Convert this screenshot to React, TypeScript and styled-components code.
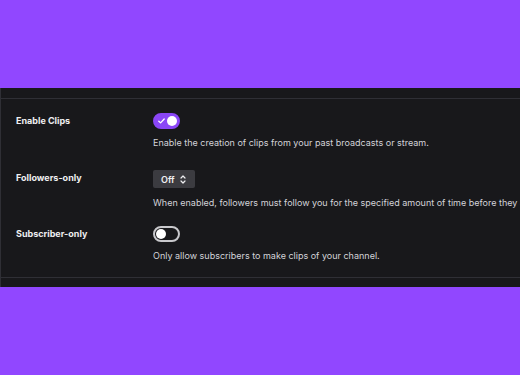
import React from "react";
import styled, { createGlobalStyle } from "styled-components";

const Global = createGlobalStyle`
  html, body { margin: 0; padding: 0; }
  body { background: #9147ff; font-family: Inter, "Noto Sans", sans-serif; }
`;

const Page = styled.div`
  width: 520px;
  height: 375px;
  background: #9147ff;
  padding-top: 88px;
  box-sizing: border-box;
  overflow: hidden;
`;

const Panel = styled.section`
  background: #18181b;
  border-left: 1px solid #2f2f35;
  width: 640px;
  padding: 10px 0 9px;
`;

const Body = styled.div`
  border-top: 1px solid #2f2f35;
  border-bottom: 1px solid #2f2f35;
  padding: 14px 0 15px;
  display: flex;
  flex-direction: column;
`;

const Row = styled.div<{ $after?: number }>`
  display: grid;
  grid-template-columns: 137px 1fr;
  padding-left: 15px;
  margin-bottom: ${(p) => p.$after ?? 0}px;
`;

const Label = styled.div`
  color: #efeff1;
  font-weight: 700;
  font-size: 9px;
  line-height: 14px;
  padding-top: 1px;
`;

const Control = styled.div<{ $gap: number }>`
  display: flex;
  flex-direction: column;
  align-items: flex-start;
  gap: ${(p) => p.$gap}px;
`;

const Desc = styled.div`
  color: #d3d3d9;
  font-size: 9px;
  line-height: 12px;
  white-space: nowrap;
`;

const Toggle = styled.div<{ $on: boolean }>`
  width: 27px;
  height: 16px;
  box-sizing: border-box;
  border-radius: 8px;
  border: 2px solid ${(p) => (p.$on ? "#8a46f6" : "#c8c8cc")};
  background: ${(p) => (p.$on ? "#8a46f6" : "transparent")};
  display: flex;
  align-items: center;
  justify-content: ${(p) => (p.$on ? "space-between" : "flex-start")};
  padding: 0 1px 0 ${(p) => (p.$on ? "3px" : "1px")};
`;

const Thumb = styled.div`
  width: 10px;
  height: 10px;
  border-radius: 50%;
  background: #ffffff;
`;

const Select = styled.div`
  height: 18px;
  width: 42px;
  box-sizing: border-box;
  background: #3b3b40;
  border-radius: 2px;
  display: flex;
  align-items: center;
  justify-content: space-between;
  padding: 0 9px 0 8px;
  color: #efeff1;
  font-size: 9px;
  font-weight: 600;
`;

const Check = () => (
  <svg width="7" height="6" viewBox="0 0 7 6">
    <path d="M0.8 3.2 L2.6 4.9 L6.2 1" fill="none" stroke="#fff" strokeWidth="1.3" strokeLinecap="round" strokeLinejoin="round" />
  </svg>
);

const Chevrons = () => (
  <svg width="6" height="9" viewBox="0 0 6 9">
    <path d="M1 3 L3 1 L5 3 M1 6 L3 8 L5 6" fill="none" stroke="#efeff1" strokeWidth="1.2" strokeLinecap="round" strokeLinejoin="round" />
  </svg>
);

export default function App() {
  return (
    <Page>
      <Global />
      <Panel>
        <Body>
          <Row $after={21}>
            <Label>Enable Clips</Label>
            <Control $gap={8}>
              <Toggle $on>
                <Check />
                <Thumb />
              </Toggle>
              <Desc>Enable the creation of clips from your past broadcasts or stream.</Desc>
            </Control>
          </Row>
          <Row $after={17}>
            <Label>Followers-only</Label>
            <Control $gap={9}>
              <Select>
                <span>Off</span>
                <Chevrons />
              </Select>
              <Desc>When enabled, followers must follow you for the specified amount of time before they are able to create clips.</Desc>
            </Control>
          </Row>
          <Row>
            <Label>Subscriber-only</Label>
            <Control $gap={8}>
              <Toggle $on={false}>
                <Thumb />
              </Toggle>
              <Desc>Only allow subscribers to make clips of your channel.</Desc>
            </Control>
          </Row>
        </Body>
      </Panel>
    </Page>
  );
}
